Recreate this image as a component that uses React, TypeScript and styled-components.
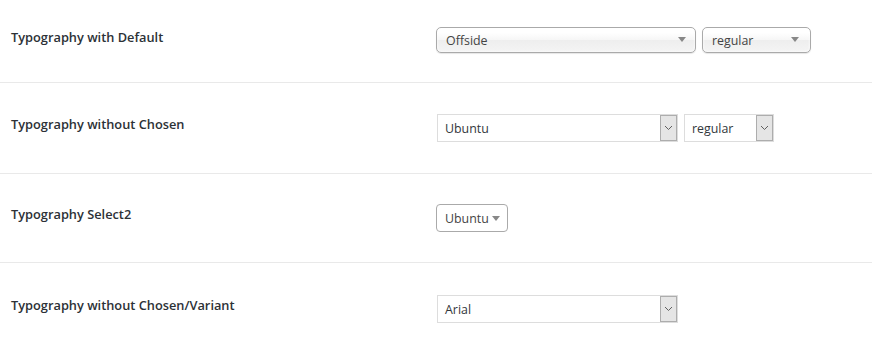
import React from 'react';
import styled, { createGlobalStyle } from 'styled-components';

const GlobalStyle = createGlobalStyle`
  html, body {
    margin: 0;
    padding: 0;
    background: #fff;
  }
  body {
    font-family: "Open Sans", "Noto Sans", sans-serif;
    color: #23282d;
  }
`;

const Table = styled.div`
  width: 872px;
`;

const Row = styled.div<{ $top: number; $height: number; $last?: boolean }>`
  display: grid;
  grid-template-columns: 436px 1fr;
  align-items: start;
  box-sizing: border-box;
  height: ${({ $height }) => $height}px;
  padding-top: ${({ $top }) => $top}px;
  border-bottom: ${({ $last }) => ($last ? 'none' : '1px solid #e9e9e9')};
`;

const Label = styled.div`
  padding-left: 11px;
  margin-top: 1px;
  font-size: 12.8px;
  font-weight: 600;
  line-height: 18px;
  color: #2c3136;
`;

const Controls = styled.div<{ $gap: number; $shift?: number }>`
  display: flex;
  gap: ${({ $gap }) => $gap}px;
  align-items: flex-start;
  margin-left: ${({ $shift }) => $shift ?? 0}px;
`;

const Chosen = styled.div<{ $width: number }>`
  position: relative;
  box-sizing: border-box;
  width: ${({ $width }) => $width}px;
  height: 26px;
  padding: 0 0 0 9px;
  border: 1px solid #aaa;
  border-radius: 5px;
  background: linear-gradient(#ffffff 20%, #f6f6f6 50%, #eeeeee 52%, #f4f4f4 100%);
  box-shadow: 0 0 3px #fff inset, 0 1px 1px rgba(0, 0, 0, 0.1);
  font-size: 12.4px;
  line-height: 25px;
  color: #444;
`;

const Triangle = styled.span<{ $right: number; $top: number }>`
  position: absolute;
  right: ${({ $right }) => $right}px;
  top: ${({ $top }) => $top}px;
  width: 0;
  height: 0;
  border-left: 4px solid transparent;
  border-right: 4px solid transparent;
  border-top: 5px solid #888;
`;

const Native = styled.div<{ $width: number }>`
  display: flex;
  box-sizing: border-box;
  width: ${({ $width }) => $width}px;
  height: 28px;
  border: 1px solid #ddd;
  background: #fff;
  font-size: 12.4px;
  color: #32373c;
`;

const NativeText = styled.span`
  flex: 1;
  padding-left: 7px;
  line-height: 27px;
`;

const ArrowBox = styled.span`
  display: flex;
  align-items: center;
  justify-content: center;
  box-sizing: border-box;
  width: 17px;
  height: 26px;
  border: 1px solid #adadad;
  background: #e5e5e5;
`;

const Select2 = styled.div`
  position: relative;
  box-sizing: border-box;
  width: 72px;
  height: 28px;
  padding-left: 8px;
  border: 1px solid #aaa;
  border-radius: 4px;
  background: #fff;
  font-size: 12.4px;
  line-height: 27px;
  color: #444;
`;

const Chevron = () => (
  <svg width="9" height="6" viewBox="0 0 9 6">
    <path d="M1 1 L4.5 4.5 L8 1" fill="none" stroke="#606060" strokeWidth="1" />
  </svg>
);

export default function App() {
  return (
    <>
      <GlobalStyle />
      <Table>
        <Row $top={27} $height={83}>
          <Label>Typography with Default</Label>
          <Controls $gap={6}>
            <Chosen $width={260}>
              Offside
              <Triangle $right={9} $top={9} />
            </Chosen>
            <Chosen $width={109}>
              regular
              <Triangle $right={11} $top={9} />
            </Chosen>
          </Controls>
        </Row>
        <Row $top={31} $height={91}>
          <Label>Typography without Chosen</Label>
          <Controls $gap={6} $shift={1}>
            <Native $width={241}>
              <NativeText>Ubuntu</NativeText>
              <ArrowBox>
                <Chevron />
              </ArrowBox>
            </Native>
            <Native $width={90}>
              <NativeText>regular</NativeText>
              <ArrowBox>
                <Chevron />
              </ArrowBox>
            </Native>
          </Controls>
        </Row>
        <Row $top={30} $height={89}>
          <Label>Typography Select2</Label>
          <Controls $gap={0}>
            <Select2>
              Ubuntu
              <Triangle $right={7} $top={11} />
            </Select2>
          </Controls>
        </Row>
        <Row $top={32} $height={83} $last>
          <Label>Typography without Chosen/Variant</Label>
          <Controls $gap={0} $shift={1}>
            <Native $width={241}>
              <NativeText>Arial</NativeText>
              <ArrowBox>
                <Chevron />
              </ArrowBox>
            </Native>
          </Controls>
        </Row>
      </Table>
    </>
  );
}
